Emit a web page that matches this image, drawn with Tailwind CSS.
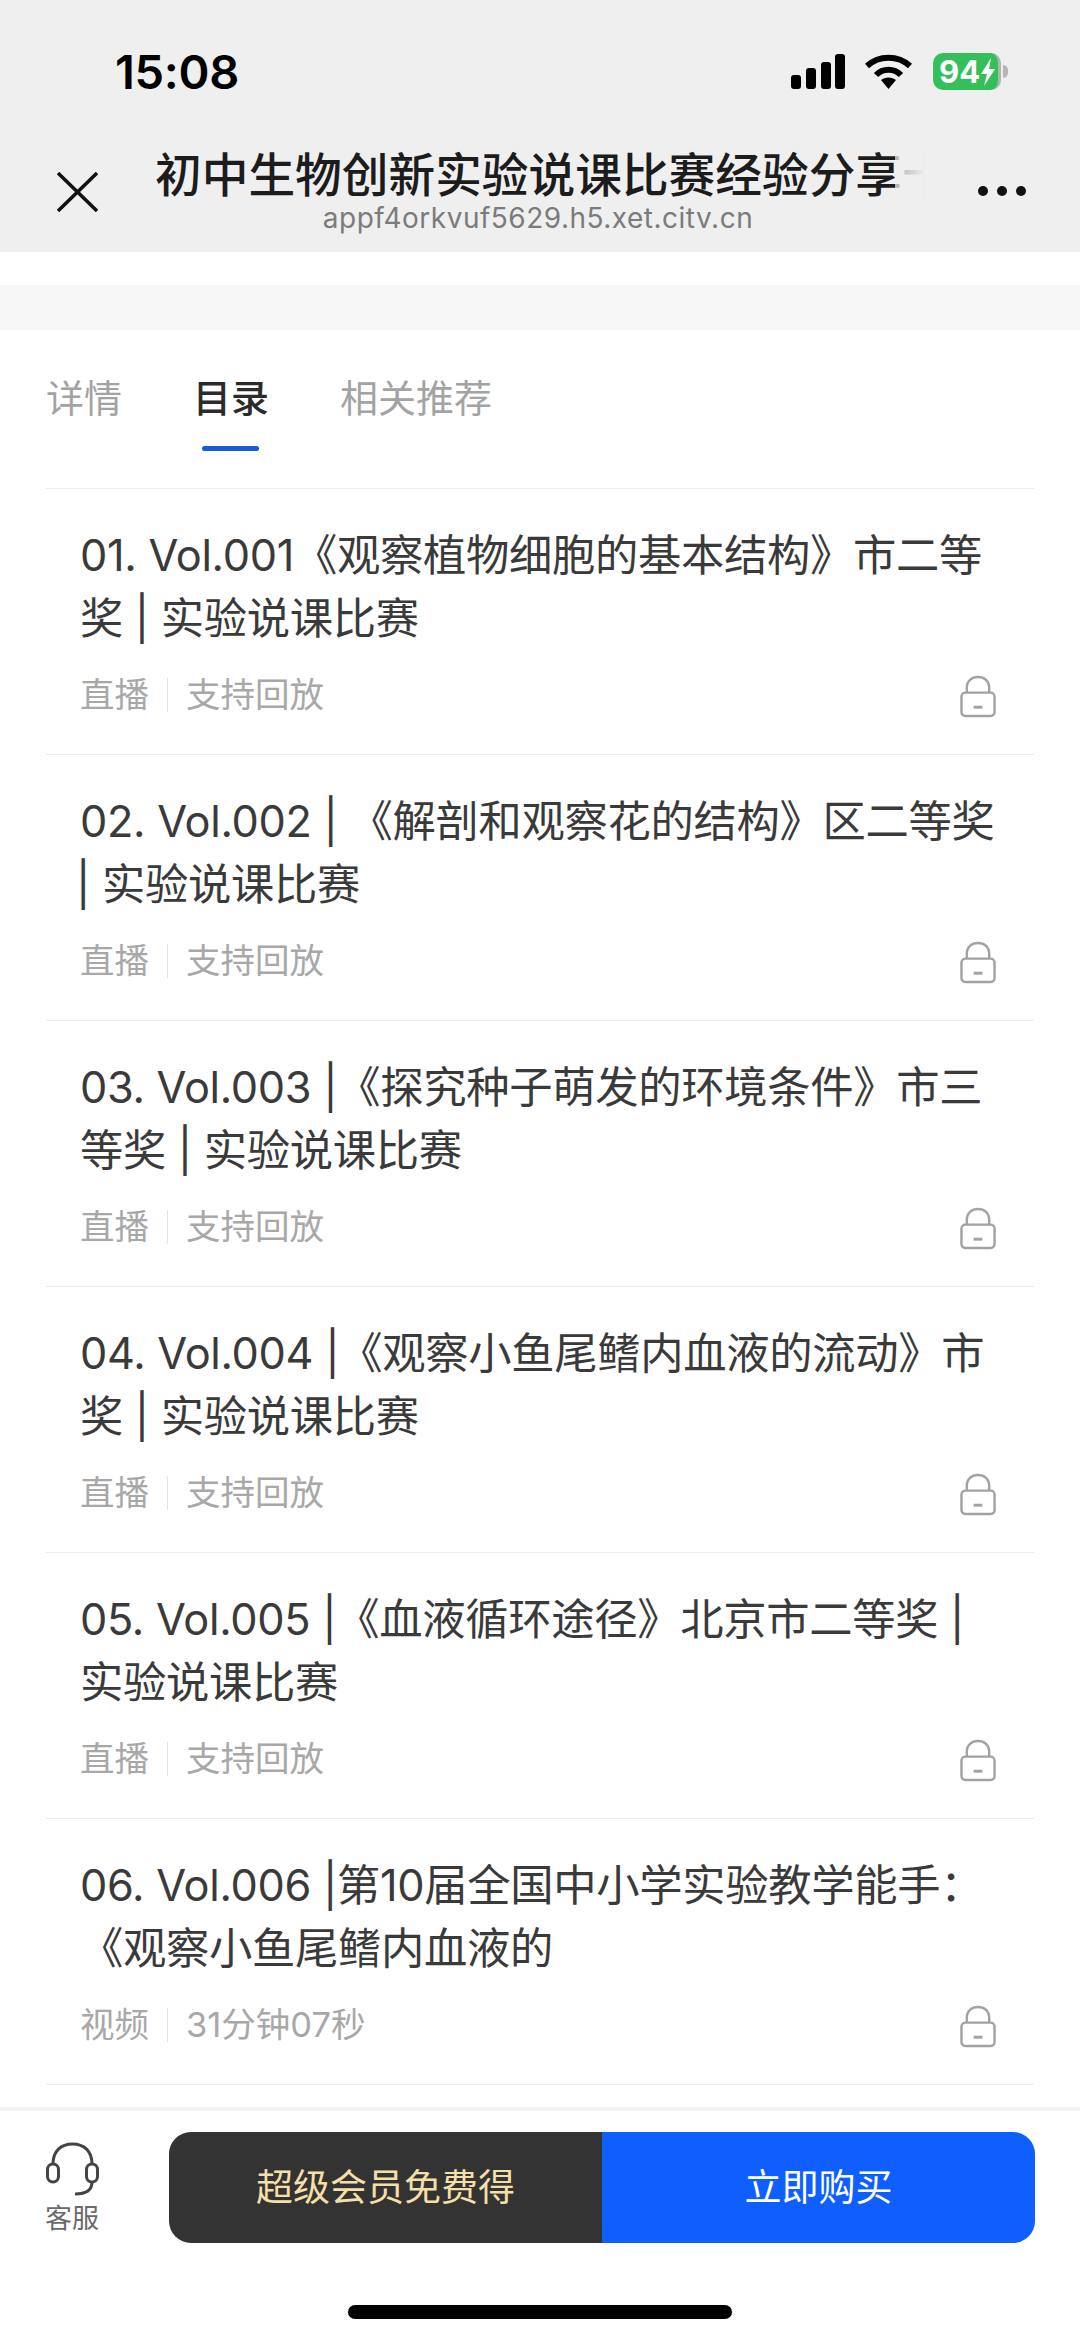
<!DOCTYPE html>
<html lang="zh-CN">
<head>
    <meta charset="UTF-8">
    <meta name="viewport" content="width=device-width, initial-scale=1.0">
    <title>目录</title>
    <script src="https://cdn.jsdelivr.net/npm/@tailwindcss/browser@4"></script>
</head>
<body class="bg-white font-['Inter','Noto_Sans_CJK_SC',sans-serif]">
<div class="w-[1080px] h-[2337px] flex flex-col overflow-hidden bg-white">

    <!-- header -->
    <header class="h-[252px] shrink-0 bg-[#efefef] flex flex-col">
        <div class="h-[150px] flex justify-between pl-[115px] pr-[72px] pt-[44px]">
            <span class="text-[47px] leading-[56px] font-semibold text-black tracking-[-0.3px]">15:08</span>
            <div class="flex items-start pt-[10px]">
                <svg class="w-[54px] h-[35px]" viewBox="0 0 54 35" fill="#000">
                    <rect x="0" y="21" width="10" height="14" rx="3"/>
                    <rect x="15" y="14" width="10" height="21" rx="3"/>
                    <rect x="30" y="8" width="10" height="27" rx="3"/>
                    <rect x="44" y="0" width="10" height="35" rx="3"/>
                </svg>
                <svg class="w-[47px] h-[35px] ml-[20px]" viewBox="0 0 47 35" fill="none" stroke="#000" stroke-width="6">
                    <path d="M2 12 C14 1 33 1 45 12"/>
                    <path d="M11 21 C18 14 29 14 36 21"/>
                    <path d="M16 26 L23.5 35 L31 26 C27 22.5 20 22.5 16 26 Z" fill="#000" stroke="none"/>
                </svg>
                <div class="ml-[21px] -mt-[1px] w-[68px] h-[37px] rounded-[10px] bg-[#35bf5c] border-r-[3px] border-[#a9b8ad] flex items-center pl-[6px] text-white">
                    <span class="text-[31px] leading-[37px] font-bold font-['Inter',sans-serif]">94</span>
                    <svg class="w-[16px] h-[28px]" viewBox="0 0 16 28" fill="#fff"><path d="M11 0 L1 16 H7 L4 28 L15 11 H9 Z"/></svg>
                </div>
                <div class="ml-[2px] mt-[11px] w-[5px] h-[13px] bg-[#b5b5b5] rounded-r-full"></div>
            </div>
        </div>
        <div class="flex items-start pl-[57px]">
            <svg class="w-[41px] h-[40px] mt-[22px] shrink-0" viewBox="0 0 41 40" fill="none" stroke="#111" stroke-width="3.5">
                <path d="M1 1 L40 39 M40 1 L1 39"/>
            </svg>
            <div class="ml-[57px] w-[770px] flex flex-col items-start">
                <div class="relative w-[770px] h-[50px] overflow-hidden whitespace-nowrap text-[46.7px] leading-[50px] text-[#1c1c1c] font-medium">
                    初中生物创新实验说课比赛经验分享十
                    <div class="absolute right-0 top-0 w-[30px] h-[50px] bg-gradient-to-r from-[#efefef]/70 to-[#efefef]"></div>
                </div>
                <div class="w-[770px] -ml-[2px] text-center text-[28px] leading-[36px] text-[#7b7b7b] tracking-[0.5px]">appf4orkvuf5629.h5.xet.citv.cn</div>
            </div>
            <div class="ml-[53px] mt-[36px] flex gap-[9px]">
                <span class="w-[10px] h-[10px] rounded-full bg-[#111]"></span>
                <span class="w-[10px] h-[10px] rounded-full bg-[#111]"></span>
                <span class="w-[10px] h-[10px] rounded-full bg-[#111]"></span>
            </div>
        </div>
    </header>

    <div class="h-[33px] shrink-0 bg-white"></div>
    <div class="h-[45px] shrink-0 bg-[#f7f7f7]"></div>

    <!-- tabs -->
    <nav class="mx-[46px] h-[159px] shrink-0 border-b border-[#ececec] flex gap-[71px] pt-[44px] text-[38px] leading-[48px] text-[#a3a3a3]">
        <span>详情</span>
        <div class="relative text-[#2b2b2b] font-medium">
            目录
            <span class="absolute left-[9px] top-[72px] w-[57px] h-[5px] rounded-full bg-[#1a5ad6]"></span>
        </div>
        <span>相关推荐</span>
    </nav>

    <!-- lessons -->
    <main class="flex-1 overflow-hidden">
        <ul class="mx-[46px]">
            <li class="h-[266px] border-b border-[#ececec] pt-[35px] pl-[34px] pr-[30px]">
                <div class="text-[43.3px] tracking-[-0.3px] leading-[63px] h-[126px] whitespace-nowrap text-[#3a3a3a]">01. Vol.001《观察植物细胞的基本结构》市二等<br>奖 | 实验说课比赛</div>
                <div class="mt-[22px] flex items-center justify-between">
                    <div class="flex items-center text-[34.5px] leading-[46px] text-[#a8a8a8]">
                        <span>直播</span>
                        <span class="mx-[18px] w-[1px] h-[34px] bg-[#e4e4e4]"></span>
                        <span>支持回放</span>
                    </div>
                    <svg class="w-[36px] h-[43px] mr-[8px] mt-[3px]" viewBox="0 0 37 44" fill="none" stroke="#a2a2a2" stroke-width="2.5">
                        <path d="M7 18 V13 C7 6 12 2 18.5 2 C25 2 30 6 30 13 V18"/>
                        <rect x="1.5" y="18" width="34" height="24" rx="4"/>
                        <path d="M14 33 H23" stroke-width="3"/>
                    </svg>
                </div>
            </li>
            <li class="h-[266px] border-b border-[#ececec] pt-[35px] pl-[34px] pr-[30px]">
                <div class="text-[43.3px] tracking-[-0.3px] leading-[63px] h-[126px] whitespace-nowrap text-[#3a3a3a]">02. Vol.002 | 《解剖和观察花的结构》区二等奖<br><span class="-ml-[4px]">|</span> 实验说课比赛</div>
                <div class="mt-[22px] flex items-center justify-between">
                    <div class="flex items-center text-[34.5px] leading-[46px] text-[#a8a8a8]">
                        <span>直播</span>
                        <span class="mx-[18px] w-[1px] h-[34px] bg-[#e4e4e4]"></span>
                        <span>支持回放</span>
                    </div>
                    <svg class="w-[36px] h-[43px] mr-[8px] mt-[3px]" viewBox="0 0 37 44" fill="none" stroke="#a2a2a2" stroke-width="2.5">
                        <path d="M7 18 V13 C7 6 12 2 18.5 2 C25 2 30 6 30 13 V18"/>
                        <rect x="1.5" y="18" width="34" height="24" rx="4"/>
                        <path d="M14 33 H23" stroke-width="3"/>
                    </svg>
                </div>
            </li>
            <li class="h-[266px] border-b border-[#ececec] pt-[35px] pl-[34px] pr-[30px]">
                <div class="text-[43.3px] tracking-[-0.3px] leading-[63px] h-[126px] whitespace-nowrap text-[#3a3a3a]">03. Vol.003 |《探究种子萌发的环境条件》市三<br>等奖 | 实验说课比赛</div>
                <div class="mt-[22px] flex items-center justify-between">
                    <div class="flex items-center text-[34.5px] leading-[46px] text-[#a8a8a8]">
                        <span>直播</span>
                        <span class="mx-[18px] w-[1px] h-[34px] bg-[#e4e4e4]"></span>
                        <span>支持回放</span>
                    </div>
                    <svg class="w-[36px] h-[43px] mr-[8px] mt-[3px]" viewBox="0 0 37 44" fill="none" stroke="#a2a2a2" stroke-width="2.5">
                        <path d="M7 18 V13 C7 6 12 2 18.5 2 C25 2 30 6 30 13 V18"/>
                        <rect x="1.5" y="18" width="34" height="24" rx="4"/>
                        <path d="M14 33 H23" stroke-width="3"/>
                    </svg>
                </div>
            </li>
            <li class="h-[266px] border-b border-[#ececec] pt-[35px] pl-[34px] pr-[30px]">
                <div class="text-[43.3px] tracking-[-0.3px] leading-[63px] h-[126px] whitespace-nowrap text-[#3a3a3a]">04. Vol.004 |《观察小鱼尾鳍内血液的流动》市<br>奖 | 实验说课比赛</div>
                <div class="mt-[22px] flex items-center justify-between">
                    <div class="flex items-center text-[34.5px] leading-[46px] text-[#a8a8a8]">
                        <span>直播</span>
                        <span class="mx-[18px] w-[1px] h-[34px] bg-[#e4e4e4]"></span>
                        <span>支持回放</span>
                    </div>
                    <svg class="w-[36px] h-[43px] mr-[8px] mt-[3px]" viewBox="0 0 37 44" fill="none" stroke="#a2a2a2" stroke-width="2.5">
                        <path d="M7 18 V13 C7 6 12 2 18.5 2 C25 2 30 6 30 13 V18"/>
                        <rect x="1.5" y="18" width="34" height="24" rx="4"/>
                        <path d="M14 33 H23" stroke-width="3"/>
                    </svg>
                </div>
            </li>
            <li class="h-[266px] border-b border-[#ececec] pt-[35px] pl-[34px] pr-[30px]">
                <div class="text-[43.3px] tracking-[-0.3px] leading-[63px] h-[126px] whitespace-nowrap text-[#3a3a3a]">05. Vol.005 |《血液循环途径》北京市二等奖 |<br>实验说课比赛</div>
                <div class="mt-[22px] flex items-center justify-between">
                    <div class="flex items-center text-[34.5px] leading-[46px] text-[#a8a8a8]">
                        <span>直播</span>
                        <span class="mx-[18px] w-[1px] h-[34px] bg-[#e4e4e4]"></span>
                        <span>支持回放</span>
                    </div>
                    <svg class="w-[36px] h-[43px] mr-[8px] mt-[3px]" viewBox="0 0 37 44" fill="none" stroke="#a2a2a2" stroke-width="2.5">
                        <path d="M7 18 V13 C7 6 12 2 18.5 2 C25 2 30 6 30 13 V18"/>
                        <rect x="1.5" y="18" width="34" height="24" rx="4"/>
                        <path d="M14 33 H23" stroke-width="3"/>
                    </svg>
                </div>
            </li>
            <li class="h-[266px] border-b border-[#ececec] pt-[35px] pl-[34px] pr-[30px]">
                <div class="text-[43.3px] tracking-[-0.3px] leading-[63px] h-[126px] whitespace-nowrap text-[#3a3a3a]">06. Vol.006 |第10届全国中小学实验教学能手：<br>《观察小鱼尾鳍内血液的</div>
                <div class="mt-[22px] flex items-center justify-between">
                    <div class="flex items-center text-[34.5px] leading-[46px] text-[#a8a8a8]">
                        <span>视频</span>
                        <span class="mx-[18px] w-[1px] h-[34px] bg-[#e4e4e4]"></span>
                        <span>31分钟07秒</span>
                    </div>
                    <svg class="w-[36px] h-[43px] mr-[8px] mt-[3px]" viewBox="0 0 37 44" fill="none" stroke="#a2a2a2" stroke-width="2.5">
                        <path d="M7 18 V13 C7 6 12 2 18.5 2 C25 2 30 6 30 13 V18"/>
                        <rect x="1.5" y="18" width="34" height="24" rx="4"/>
                        <path d="M14 33 H23" stroke-width="3"/>
                    </svg>
                </div>
            </li>
        </ul>
    </main>

    <!-- bottom bar -->
    <footer class="h-[230px] shrink-0 border-t-[4px] border-[#f3f3f3] bg-white flex flex-col">
        <div class="flex pt-[21px] pl-[40px] pr-[45px] h-[170px]">
            <div class="w-[64px] flex flex-col items-center pt-[8px]">
                <svg class="w-[64px] h-[58px]" viewBox="0 0 64 58" fill="none" stroke="#444" stroke-width="3">
                    <path d="M13 24 C13 11 21 4 32.5 4 C44 4 52 11 52 24"/>
                    <rect x="7.5" y="24" width="11" height="18" rx="5.5"/>
                    <rect x="46.5" y="24" width="11" height="18" rx="5.5"/>
                    <path d="M52 42 C52 50 46 54 35 54"/>
                </svg>
                <span class="mt-[4px] text-[27px] leading-[34px] text-[#6a6a6a] whitespace-nowrap">客服</span>
            </div>
            <div class="ml-[65px] flex-1 h-[111px] flex rounded-[22px] overflow-hidden text-[37px]">
                <div class="w-[433px] bg-[#333333] text-[#f5dfa8] flex items-center justify-center">超级会员免费得</div>
                <div class="flex-1 bg-[#0f5fff] text-white flex items-center justify-center">立即购买</div>
            </div>
        </div>
        <div class="mt-[24px] mx-auto w-[384px] h-[14px] rounded-full bg-black"></div>
    </footer>
</div>
</body>
</html>
